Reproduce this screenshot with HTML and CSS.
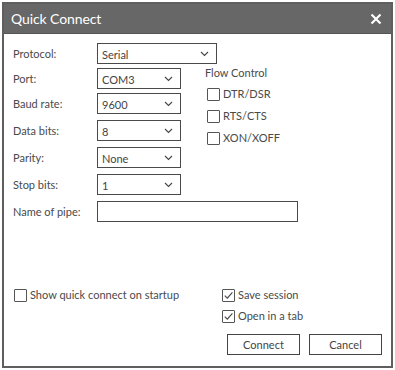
FILE: index.html
```html
<!DOCTYPE html>
<html>
<head>
<meta charset="utf-8">
<link rel="stylesheet" href="styles.css">
</head>
<body>
<div class="window">
  <div class="titlebar">
    <span class="title">Quick Connect</span>
    <svg class="close" width="12" height="12" viewBox="0 0 12 12"><path d="M1.5 1.5 L10.5 10.5 M10.5 1.5 L1.5 10.5" stroke="#fff" stroke-width="2.2" fill="none"/></svg>
  </div>
  <div class="content">
    <div class="row">
      <span class="label">Protocol:</span>
      <div class="select w-protocol"><span>Serial</span><svg class="chev" width="9" height="6" viewBox="0 0 9 6"><path d="M1 1 L4.5 4.5 L8 1" stroke="#444" stroke-width="1.1" fill="none"/></svg></div>
    </div>
    <div class="middle">
      <div class="col-left">
        <div class="row">
          <span class="label">Port:</span>
          <div class="select w-short"><span>COM3</span><svg class="chev" width="9" height="6" viewBox="0 0 9 6"><path d="M1 1 L4.5 4.5 L8 1" stroke="#444" stroke-width="1.1" fill="none"/></svg></div>
        </div>
        <div class="row">
          <span class="label">Baud rate:</span>
          <div class="select w-short"><span>9600</span><svg class="chev" width="9" height="6" viewBox="0 0 9 6"><path d="M1 1 L4.5 4.5 L8 1" stroke="#444" stroke-width="1.1" fill="none"/></svg></div>
        </div>
        <div class="row gap-lg">
          <span class="label">Data bits:</span>
          <div class="select w-short"><span>8</span><svg class="chev" width="9" height="6" viewBox="0 0 9 6"><path d="M1 1 L4.5 4.5 L8 1" stroke="#444" stroke-width="1.1" fill="none"/></svg></div>
        </div>
        <div class="row gap-lg">
          <span class="label">Parity:</span>
          <div class="select w-short"><span>None</span><svg class="chev" width="9" height="6" viewBox="0 0 9 6"><path d="M1 1 L4.5 4.5 L8 1" stroke="#444" stroke-width="1.1" fill="none"/></svg></div>
        </div>
        <div class="row gap-lg">
          <span class="label">Stop bits:</span>
          <div class="select w-short"><span>1</span><svg class="chev" width="9" height="6" viewBox="0 0 9 6"><path d="M1 1 L4.5 4.5 L8 1" stroke="#444" stroke-width="1.1" fill="none"/></svg></div>
        </div>
      </div>
      <div class="col-flow">
        <div class="flow-title">Flow Control</div>
        <label class="check"><span class="box"></span>DTR/DSR</label>
        <label class="check"><span class="box"></span>RTS/CTS</label>
        <label class="check"><span class="box"></span>XON/XOFF</label>
      </div>
    </div>
    <div class="row gap-md">
      <span class="label">Name of pipe:</span>
      <div class="input w-pipe"></div>
    </div>
  </div>
  <div class="bottom">
    <div class="bottom-left">
      <label class="check"><span class="box"></span>Show quick connect on startup</label>
    </div>
    <div class="bottom-right">
      <label class="check"><span class="box"><svg width="11" height="11" viewBox="0 0 11 11"><path d="M1.8 5.6 L4.3 8.2 L9.4 2.4" stroke="#444" stroke-width="1.1" fill="none"/></svg></span>Save session</label>
      <label class="check check-2"><span class="box"><svg width="11" height="11" viewBox="0 0 11 11"><path d="M1.8 5.6 L4.3 8.2 L9.4 2.4" stroke="#444" stroke-width="1.1" fill="none"/></svg></span>Open in a tab</label>
      <div class="buttons">
        <div class="btn">Connect</div>
        <div class="btn">Cancel</div>
      </div>
    </div>
  </div>
</div>
</body>
</html>
```
FILE: styles.css
```css
html, body {
  margin: 0;
  padding: 0;
  background: #fff;
}
body {
  font-family: "Lato", "Open Sans", sans-serif;
  font-size: 11px;
  color: #4a4a4a;
}
.window {
  margin: 2px 0 0 2px;
  width: 391px;
  height: 366px;
  box-sizing: border-box;
  border: 2px solid #5f5f5f;
  display: flex;
  flex-direction: column;
  background: #fff;
}
.titlebar {
  background: #676767;
  color: #fff;
  display: flex;
  align-items: center;
  justify-content: space-between;
  padding: 0 9px 0 7px;
  border-bottom: 1px solid #555;
  box-sizing: border-box;
  height: 30px;
}
.title {
  font-size: 14px;
  letter-spacing: -0.1px;
}
.close {
  display: block;
}
.content {
  padding: 9px 0 0 9px;
  display: flex;
  flex-direction: column;
}
.row {
  display: flex;
  align-items: center;
  height: 21px;
}
.col-left .row {
  margin-top: 4px;
}
.col-left .row.gap-lg {
  margin-top: 6px;
}
.row.gap-md {
  margin-top: 6px;
}
.label {
  width: 84px;
  flex: none;
}
.select, .input {
  height: 21px;
  box-sizing: border-box;
  border: 1px solid #4a4a4a;
  display: flex;
  align-items: center;
  justify-content: space-between;
  padding: 0 7px 0 4px;
  color: #444;
}
.select span {
  padding-top: 1px;
}
.chev {
  display: block;
}
.w-protocol { width: 120px; }
.w-short { width: 84px; }
.w-pipe { width: 201px; }
.middle {
  display: flex;
}
.col-flow {
  margin-left: 24px;
  padding-top: 2px;
  display: flex;
  flex-direction: column;
}
.flow-title {
  height: 14px;
  line-height: 14px;
}
.col-flow .check {
  margin-left: 2px;
  margin-top: 7px;
}
.col-flow .check + .check {
  margin-top: 8px;
}
.check {
  display: flex;
  align-items: center;
  height: 14px;
  line-height: 14px;
}
.box {
  width: 13px;
  height: 13px;
  box-sizing: border-box;
  border: 1px solid #555;
  border-radius: 1px;
  margin-right: 3px;
  flex: none;
  display: flex;
  align-items: center;
  justify-content: center;
}
.box svg {
  display: block;
}
.bottom {
  margin-top: auto;
  display: flex;
  justify-content: space-between;
  padding: 0 9px 11px 10px;
}
.bottom-right {
  width: 160px;
  display: flex;
  flex-direction: column;
}
.check-2 {
  margin-top: 7px;
}
.buttons {
  margin-top: 11px;
  display: flex;
  justify-content: flex-end;
  gap: 9px;
}
.btn {
  width: 73px;
  height: 21px;
  box-sizing: border-box;
  border: 1px solid #444;
  display: flex;
  align-items: center;
  justify-content: center;
  color: #444;
}
```
